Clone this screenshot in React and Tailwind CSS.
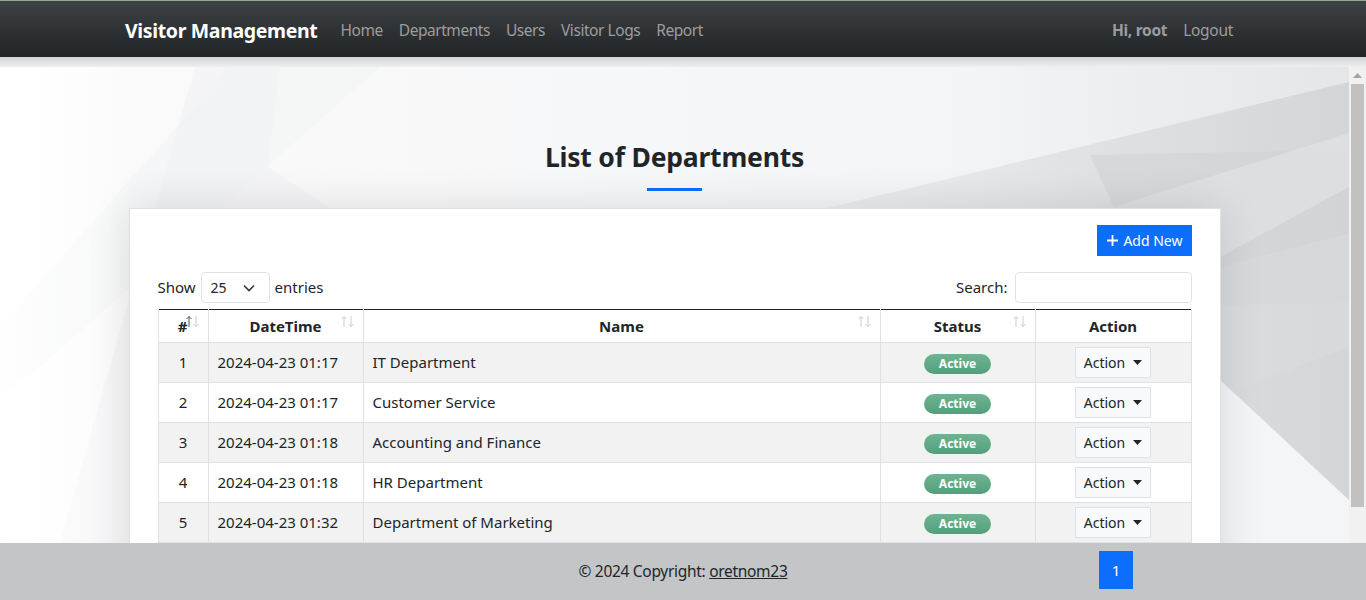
import React from 'react'

const ROWS = [
  { id: 1, date: '2024-04-23 01:17', name: 'IT Department' },
  { id: 2, date: '2024-04-23 01:17', name: 'Customer Service' },
  { id: 3, date: '2024-04-23 01:18', name: 'Accounting and Finance' },
  { id: 4, date: '2024-04-23 01:18', name: 'HR Department' },
  { id: 5, date: '2024-04-23 01:32', name: 'Department of Marketing' },
]

const NAV = ['Home', 'Departments', 'Users', 'Visitor Logs', 'Report']

function SortArrows({ active }) {
  return (
    <svg width="15" height="13" viewBox="0 0 15 13" className="absolute top-[5px] right-[8px]">
      <path d="M4 12V1.5M1.5 4L4 1.5 6.5 4" fill="none" stroke={active ? '#555' : '#c9cbcd'} strokeWidth="1" />
      <path d="M11 1v10.5M8.5 9l2.5 2.5L13.5 9" fill="none" stroke="#c9cbcd" strokeWidth="1" />
    </svg>
  )
}

function Background() {
  return (
    <svg className="absolute inset-0 h-full w-full" viewBox="0 0 1349 476" preserveAspectRatio="none">
      <defs>
        <linearGradient id="base" x1="0" y1="0" x2="1" y2="0">
          <stop offset="0" stopColor="#ffffff" />
          <stop offset="0.1" stopColor="#fafafb" />
          <stop offset="0.7" stopColor="#f4f5f6" />
          <stop offset="1" stopColor="#e4e6e8" />
        </linearGradient>
        <linearGradient id="dark" x1="0" y1="0" x2="1" y2="0">
          <stop offset="0" stopColor="#eceef0" />
          <stop offset="1" stopColor="#d3d6d9" />
        </linearGradient>
        <linearGradient id="leftfade" x1="0" y1="0" x2="1" y2="0">
          <stop offset="0" stopColor="#ffffff" stopOpacity="0.9" />
          <stop offset="1" stopColor="#ffffff" stopOpacity="0" />
        </linearGradient>
      </defs>
      <rect width="1349" height="476" fill="url(#base)" />
      <polygon points="195,0 280,0 268,100 330,141 230,476 60,476" fill="#eff0f2" opacity="0.5" />
      <polygon points="230,0 380,0 40,300 0,330 0,260" fill="#f0f1f2" opacity="0.45" />
      <polygon points="827,141 1349,15 1349,476 1220,476 1220,141" fill="url(#dark)" />
      <polygon points="1090,88 1349,83 1349,235 1160,240" fill="#cfd2d5" opacity="0.55" />
      <polygon points="1110,141 1349,66 1349,120 1220,190" fill="#e3e5e7" opacity="0.6" />
      <polygon points="1220,200 1349,166 1349,280 1220,330" fill="#dadde0" opacity="0.5" />
      <polygon points="1220,313 1349,433 1349,476 1220,476" fill="#f4f5f6" />
      <rect width="140" height="476" fill="url(#leftfade)" />
    </svg>
  )
}

export default function App() {
  return (
    <div className="relative flex h-[600px] flex-col overflow-hidden font-['Noto_Sans',sans-serif] text-[#212529]">
      {/* Navbar */}
      <nav className="h-[57px] border-t border-[#95a892] bg-gradient-to-b from-[#3f4346] to-[#212326]">
        <div className="mx-auto flex h-full w-[1140px] items-center px-3 pt-[3px]">
          <span className="mr-[15px] text-[19.5px] font-bold tracking-[-0.35px] text-white">Visitor Management</span>
          <ul className="flex">
            {NAV.map(n => (
              <li key={n} className="px-2 text-[15.5px] tracking-[-0.45px] text-[#9c9d9f]">{n}</li>
            ))}
          </ul>
          <div className="ml-auto flex items-center pr-2">
            <span className="px-2 text-[15.5px] font-bold tracking-[-0.3px] text-[#9c9d9f]">Hi, root</span>
            <span className="pl-2 text-[15.5px] tracking-[-0.3px] text-[#9c9d9f]">Logout</span>
          </div>
        </div>
      </nav>

      {/* Navbar shadow band */}
      <div className="h-[10px] bg-gradient-to-b from-[#d2d3d5] to-[#eeeff0]" />

      <div className="flex min-h-0 flex-1">
        <main className="relative flex-1 overflow-hidden">
          <Background />
          <div className="relative flex flex-col items-center pt-[73px]">
            <h2 className="text-[26.5px] font-bold leading-[34px] tracking-[-0.2px]">List of Departments</h2>
            <div className="mt-[14px] h-[3px] w-[55px] bg-[#0d6efd]" />

            {/* Card */}
            <div className="mt-[17px] w-[1092px] border border-[#dee2e6] bg-white px-[28px] pt-[16px] shadow-[0_0_40px_rgba(0,0,0,0.12)]">
              <div className="flex justify-end">
                <button className="flex h-[31px] items-center gap-1 bg-[#0d6efd] px-[9px] text-[14px] text-white">
                  <svg width="13" height="13" viewBox="0 0 13 13" className="shrink-0">
                    <path d="M6.5 1v11M1 6.5h11" stroke="white" strokeWidth="1.8" />
                  </svg>
                  Add New
                </button>
              </div>

              <div className="mt-[16px] flex items-center justify-between text-[15px]">
                <div className="flex items-center gap-[5px]">
                  <span>Show</span>
                  <div className="flex h-[31px] w-[69px] items-center justify-between rounded-[4px] border border-[#dee2e6] pl-[9px] pr-[14px] text-[14px]">
                    <span>25</span>
                    <svg width="12" height="8" viewBox="0 0 12 8">
                      <path d="M1 1.5l5 5 5-5" fill="none" stroke="#343a40" strokeWidth="1.6" />
                    </svg>
                  </div>
                  <span>entries</span>
                </div>
                <div className="flex items-center gap-[7px]">
                  <span>Search:</span>
                  <div className="h-[31px] w-[177px] rounded-[4px] border border-[#dee2e6]" />
                </div>
              </div>

              <table className="mt-[6px] w-full border-collapse border-t border-t-[#212529] text-[15px]">
                <colgroup>
                  <col className="w-[50px]" />
                  <col className="w-[155px]" />
                  <col className="w-[517px]" />
                  <col className="w-[155px]" />
                  <col />
                </colgroup>
                <thead>
                  <tr className="h-[33px] font-bold">
                    <th className="relative border border-t-0 border-[#dee2e6] pr-[20px] text-right">#<SortArrows active /></th>
                    <th className="relative border border-t-0 border-[#dee2e6]">DateTime<SortArrows /></th>
                    <th className="relative border border-t-0 border-[#dee2e6]">Name<SortArrows /></th>
                    <th className="relative border border-t-0 border-[#dee2e6]">Status<SortArrows /></th>
                    <th className="border border-t-0 border-[#dee2e6]">Action</th>
                  </tr>
                </thead>
                <tbody>
                  {ROWS.map((r, i) => (
                    <tr key={r.id} className={`h-10 ${i % 2 === 0 ? 'bg-[#f2f2f2]' : 'bg-white'}`}>
                      <td className="border border-[#dee2e6] text-center">{r.id}</td>
                      <td className="border border-[#dee2e6] px-[9px]">{r.date}</td>
                      <td className="border border-[#dee2e6] px-[9px]">{r.name}</td>
                      <td className="border border-[#dee2e6] text-center">
                        <span className="inline-block h-[20px] w-[67px] rounded-full bg-gradient-to-b from-[#6cb592] to-[#559e7b] text-[12px] font-bold leading-[20px] text-white">Active</span>
                      </td>
                      <td className="border border-[#dee2e6] text-center">
                        <span className="inline-flex h-[31px] items-center gap-[8px] border border-[#dee2e6] bg-[#f8f9fa] px-[8px] text-[14px]">
                          Action
                          <svg width="9" height="5" viewBox="0 0 9 5"><path d="M0 0h9L4.5 5z" fill="#212529" /></svg>
                        </span>
                      </td>
                    </tr>
                  ))}
                </tbody>
              </table>
              <div className="h-[40px]" />
            </div>
          </div>
        </main>

        {/* Scrollbar */}
        <div className="flex w-[17px] flex-col items-center bg-[#f1f1f1]">
          <svg width="9" height="5" viewBox="0 0 9 5" className="mt-[6px]"><path d="M0 5h9L4.5 0z" fill="#a3a3a3" /></svg>
          <div className="mt-[6px] h-[423px] w-[13px] bg-[#c1c1c1]" />
        </div>
      </div>

      {/* Footer */}
      <footer className="flex h-[57px] items-center justify-center bg-[#c4c5c7] text-[15.5px] tracking-[-0.3px]">
        <span>© 2024 Copyright: <span className="underline">oretnom23</span></span>
      </footer>

      {/* Pagination peeking over footer */}
      <span className="absolute left-[1099px] top-[551px] flex h-[38px] w-[34px] items-center justify-center bg-[#0d6efd] text-[15px] text-white">1</span>
    </div>
  )
}
